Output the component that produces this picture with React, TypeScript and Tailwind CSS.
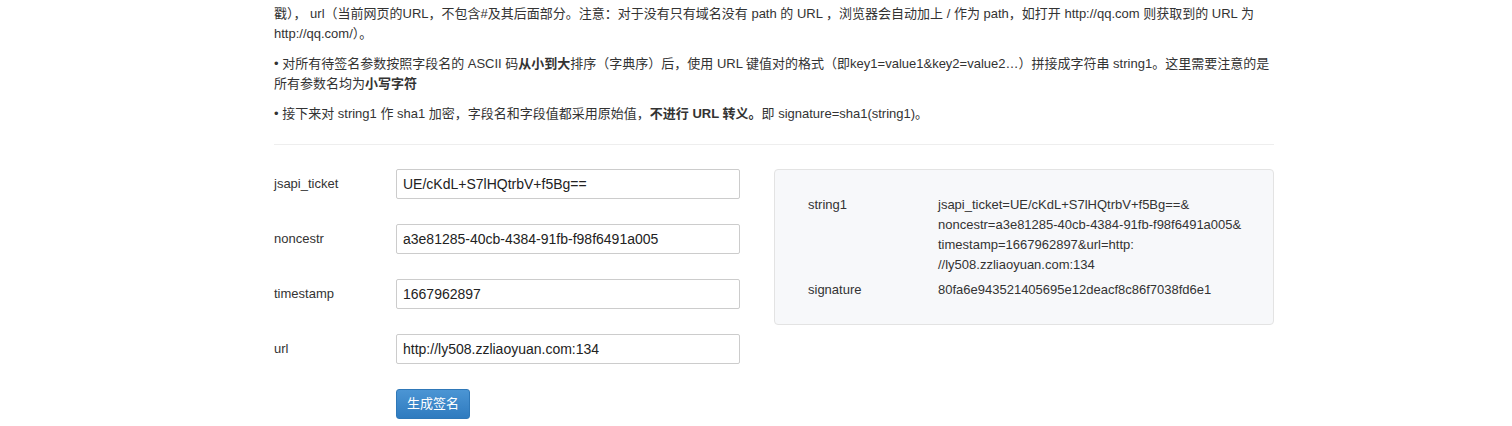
import React from "react";

const fields = [
    { label: "jsapi_ticket", value: "UE/cKdL+S7lHQtrbV+f5Bg==" },
    { label: "noncestr", value: "a3e81285-40cb-4384-91fb-f98f6491a005" },
    { label: "timestamp", value: "1667962897" },
    { label: "url", value: "http://ly508.zzliaoyuan.com:134" },
];

const string1Lines = [
    "jsapi_ticket=UE/cKdL+S7lHQtrbV+f5Bg==&",
    "noncestr=a3e81285-40cb-4384-91fb-f98f6491a005&",
    "timestamp=1667962897&url=http:",
    "//ly508.zzliaoyuan.com:134",
];

const App = () => {
    return (
        <div
            className="min-h-[426px] w-[1512px] overflow-hidden bg-white text-[13px] leading-[20px] text-[#333]"
            style={{ fontFamily: '"Liberation Sans", Arial, "Noto Sans CJK SC", sans-serif' }}>
            <div className="ml-[274px] w-[1000px] pt-[4px]">
                <div className="mb-[10px]">
                    <div className="whitespace-nowrap">
                        戳）， url（当前网页的URL，不包含#及其后面部分。注意：对于没有只有域名没有 path 的 URL ，浏览器会自动加上 / 作为 path，如打开 http://qq.com 则获取到的 URL 为
                    </div>
                    <div className="whitespace-nowrap">http://qq.com/）。</div>
                </div>
                <div className="mb-[10px]">
                    <div className="whitespace-nowrap">
                        • 对所有待签名参数按照字段名的 ASCII 码<b>从小到大</b>排序（字典序）后，使用 URL 键值对的格式（即key1=value1&amp;key2=value2…）拼接成字符串 string1。这里需要注意的是
                    </div>
                    <div className="whitespace-nowrap">
                        所有参数名均为<b>小写字符</b>
                    </div>
                </div>
                <div className="whitespace-nowrap">
                    • 接下来对 string1 作 sha1 加密，字段名和字段值都采用原始值，<b>不进行 URL 转义。</b>即 signature=sha1(string1)。
                </div>

                <hr className="mt-[20px] border-0 border-t border-[#eee]" />

                <div className="mt-[24px] flex flex-row items-start">
                    <div className="flex w-[466px] flex-col gap-[25px]">
                        {fields.map((field) => (
                            <div key={field.label} className="flex flex-row items-center">
                                <div className="w-[122px]">{field.label}</div>
                                <input
                                    readOnly
                                    value={field.value}
                                    className="h-[30px] w-[344px] rounded-[2px] border border-[#ccc] bg-white px-[6px] text-[14px] text-[#222] outline-none"
                                    style={{ fontFamily: '"Liberation Sans", Arial, sans-serif' }}
                                />
                            </div>
                        ))}
                        <div className="flex flex-row">
                            <div className="w-[122px]" />
                            <button
                                className="h-[30px] w-[74px] rounded-[3px] border border-[#2f78b8] bg-gradient-to-b from-[#4b95d4] to-[#2f7bbf] text-[13px] text-white">
                                生成签名
                            </button>
                        </div>
                    </div>

                    <div className="ml-[34px] h-[156px] w-[500px] rounded-[4px] border border-[#e3e3e3] bg-[#f7f8fa] px-[33px] py-[25px]">
                        <div className="grid grid-cols-[130px_1fr] gap-y-[5px]">
                            <div>string1</div>
                            <div>
                                {string1Lines.map((line) => (
                                    <div key={line} className="whitespace-nowrap">{line}</div>
                                ))}
                            </div>
                            <div>signature</div>
                            <div>80fa6e943521405695e12deacf8c86f7038fd6e1</div>
                        </div>
                    </div>
                </div>
            </div>
        </div>
    );
};

export default App;
